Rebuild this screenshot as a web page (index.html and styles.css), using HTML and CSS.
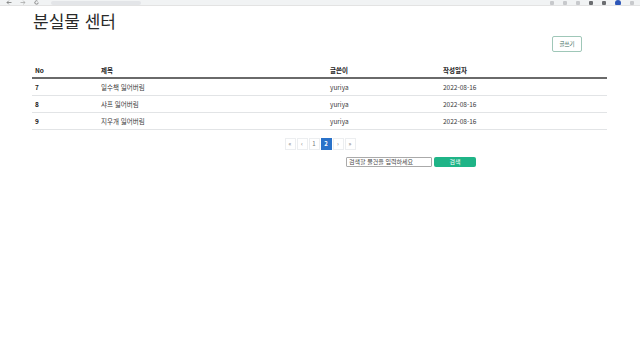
FILE: index.html
```html
<!DOCTYPE html>
<html lang="ko">
<head>
<meta charset="utf-8">
<link rel="stylesheet" href="styles.css">
</head>
<body>
<div class="chrome">
  <div class="chrome-left">
    <svg class="nav" width="6" height="5" viewBox="0 0 6 5"><path d="M5.5 2.5H1M2.8 0.7L1 2.5l1.8 1.8" fill="none" stroke="#777" stroke-width="0.8"/></svg>
    <svg class="nav" width="6" height="5" viewBox="0 0 6 5"><path d="M0.5 2.5H5M3.2 0.7L5 2.5 3.2 4.3" fill="none" stroke="#aaa" stroke-width="0.8"/></svg>
    <svg class="nav" width="5" height="5" viewBox="0 0 5 5"><path d="M4.2 2.5a1.7 1.7 0 1 1-0.6-1.3" fill="none" stroke="#777" stroke-width="0.8"/></svg>
    <span class="url"></span>
  </div>
  <div class="chrome-right">
    <span class="dot"></span><span class="dot"></span><span class="dot"></span><span class="dot dark"></span><span class="dot dark"></span><span class="avatar"></span><span class="dot"></span>
  </div>
</div>
<div class="container">
  <h1 class="title">분실물 센터</h1>
  <div class="toolbar">
    <button class="write-btn">글쓰기</button>
  </div>
  <table class="board">
    <thead>
      <tr>
        <th class="c-no">No</th>
        <th class="c-title">제목</th>
        <th class="c-writer">글쓴이</th>
        <th class="c-date">작성일자</th>
      </tr>
    </thead>
    <tbody>
      <tr><td class="num">7</td><td>일수책 잃어버림</td><td>yuriya</td><td>2022-08-16</td></tr>
      <tr><td class="num">8</td><td>샤프 잃어버림</td><td>yuriya</td><td>2022-08-16</td></tr>
      <tr><td class="num">9</td><td>지우개 잃어버림</td><td>yuriya</td><td>2022-08-16</td></tr>
    </tbody>
  </table>
  <ul class="pagination">
    <li class="page">&laquo;</li>
    <li class="page">&lsaquo;</li>
    <li class="page">1</li>
    <li class="page active">2</li>
    <li class="page">&rsaquo;</li>
    <li class="page">&raquo;</li>
  </ul>
  <div class="search">
    <input class="search-input" type="text" placeholder="검색할 물건을 입력하세요">
    <button class="search-btn">검색</button>
  </div>
</div>
</body>
</html>
```
FILE: styles.css
```css
* { box-sizing: border-box; }
html, body { margin: 0; padding: 0; background: #fff; }
body {
  font-family: "Noto Sans CJK KR", "Noto Sans", sans-serif;
  color: #212529;
  width: 640px;
  height: 360px;
  overflow: hidden;
}
.chrome {
  height: 6px;
  background: #f1f3f4;
  border-bottom: 1px solid #e3e3e3;
  display: flex;
  justify-content: space-between;
  align-items: center;
  padding: 0 6px;
  overflow: hidden;
}
.chrome-left { display: flex; align-items: center; gap: 8px; }
.nav { display: block; }
.url { width: 90px; height: 4px; background: #e3e5e8; border-radius: 2px; margin-left: 4px; }
.chrome-right { display: flex; align-items: center; gap: 9px; }
.dot { width: 4px; height: 4px; border-radius: 1px; background: #c7c9cc; }
.dot.dark { background: #6b6d70; }
.avatar { width: 6px; height: 6px; border-radius: 50%; background: #2c56b8; }

.container {
  width: 576px;
  margin-left: 32px;
}
.title {
  margin: 2px 0 0 1px;
  font-size: 17px;
  line-height: 26px;
  font-weight: 400;
  color: #2a2a2a;
}
.toolbar {
  display: flex;
  justify-content: flex-end;
  padding-right: 26px;
  margin-top: 2px;
}
.write-btn {
  width: 30px;
  height: 16px;
  padding: 0;
  font-family: inherit;
  font-size: 5.5px;
  color: #3e6e5e;
  background: #fff;
  border: 1px solid #9fc7b8;
  border-radius: 2px;
}
.board {
  width: 575px;
  margin-top: 10px;
  border-collapse: collapse;
  font-size: 6.5px;
}
.board th, .board td {
  text-align: left;
  padding: 0 0 0 3px;
  height: 17px;
  vertical-align: middle;
}
.board th {
  height: 16px;
  font-weight: 700;
  color: #222;
  border-bottom: 2px solid #6a6a6a;
}
.board td {
  color: #3a3a3a;
  font-weight: 400;
  border-bottom: 1px solid #e2e4e6;
}
.board td.num { font-weight: 700; color: #222; }
.c-no { width: 66px; }
.c-title { width: 229px; }
.c-writer { width: 113px; }
.c-date { width: 167px; }

.pagination {
  list-style: none;
  margin: 8px 0 0;
  padding: 0;
  display: flex;
  justify-content: center;
  gap: 1px;
}
.page {
  width: 11px;
  height: 12px;
  display: flex;
  align-items: center;
  justify-content: center;
  font-size: 6px;
  color: #777;
  border: 1px solid #eceef0;
}
.page.active {
  background: #2a72c9;
  color: #fff;
  border-color: #2a72c9;
  font-weight: 700;
}
.search {
  display: flex;
  align-items: center;
  gap: 2px;
  margin: 7px 0 0 314px;
}
.search-input {
  width: 86px;
  height: 10px;
  padding: 0 2px;
  font-family: inherit;
  font-size: 6px;
  border: 1px solid #aaa;
  border-radius: 1px;
  outline: none;
}
.search-input::placeholder { color: #444; }
.search-btn {
  width: 42px;
  height: 10px;
  padding: 0;
  font-family: inherit;
  font-size: 6px;
  color: #fff;
  background: #1fb487;
  border: none;
  border-radius: 2px;
}
```
